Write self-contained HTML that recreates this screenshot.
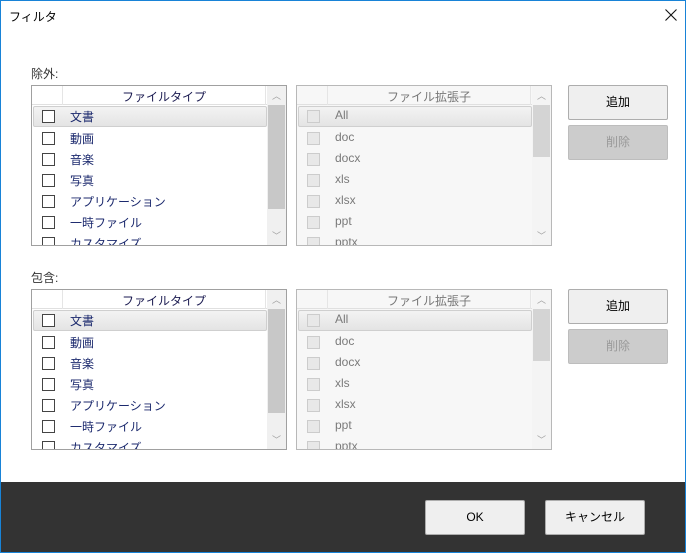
<!DOCTYPE html>
<html><head><meta charset="utf-8"><style>
*{margin:0;padding:0;box-sizing:border-box}
body{width:686px;height:553px;position:relative;background:#fff;font-family:"Liberation Sans","Noto Sans CJK JP",sans-serif;font-size:12px;overflow:hidden}
.win{position:absolute;left:0;top:0;width:686px;height:553px;border:1px solid #1883d7}
.a{position:absolute}
.title{left:9px;top:8px;font-size:12px;color:#000}
.lbl{font-size:12px;color:#333}
.list{position:absolute;width:256px;height:161px;border:1px solid #a0a0a0;background:#fff;overflow:hidden}
.list.dis{border-color:#b8b8b8;background:#f7f7f7}
.hdr{position:absolute;left:0;top:0;width:235px;height:19px;border-bottom:1px solid #e0e0e0;background:#fff}
.dis .hdr{background:#f7f7f7}
.hdr .sep{position:absolute;left:30px;top:0;width:1px;height:19px;background:#e5e5e5}
.hdr .sep2{position:absolute;left:233px;top:0;width:1px;height:19px;background:#e5e5e5}
.hdr span{position:absolute;left:31px;width:202px;top:2px;text-align:center;color:#1a1a50}
.dis .hdr span{color:#777}
.sb{position:absolute;left:235px;top:0;width:19px;height:159px;background:#f0f0f0}
.dis .sb{background:#f4f4f4}
.thumb{position:absolute;left:1px;width:17px;background:#c8c8c8}
.dis .thumb{background:#d4d4d4}
.arr{position:absolute;left:5px;font-size:9px;color:#a0a0a0}
.row{position:absolute;left:1px;width:234px;height:21px}
.row.sel{border:1px solid #cfcfcf;background:linear-gradient(#f3f3f3,#e4e4e4);border-radius:2px}
.cb{position:absolute;left:9px;top:4px;width:13px;height:13px;border:1px solid #444;background:#fff}
.sel .cb{left:8px;top:3px}
.dis .cb{border-color:#ccc;background:#e8e8e8}
.row span{position:absolute;left:37px;top:2px;color:#1c2a6e;font-size:12px}
.sel span{left:36px;top:1px}
.dis .row span{color:#7a7a7a}
.btn{position:absolute;width:100px;height:35px;border:1px solid #adadad;background:#efefef;border-radius:2px;text-align:center;line-height:33px;color:#000;font-size:12px}
.btn.off{background:#cccccc;border-color:#bdbdbd;color:#999}
.foot{position:absolute;left:1px;top:482px;width:684px;height:70px;background:#333}
</style></head><body>
<div class="win"></div>
<div class="a title">フィルタ</div>
<svg class="a" style="left:665px;top:9px" width="12" height="12" viewBox="0 0 12 12"><path d="M0.5 0.5L11.5 11.5M11.5 0.5L0.5 11.5" stroke="#111" stroke-width="1.1" fill="none"/></svg>

<div class="a lbl" style="left:31px;top:65px">除外:</div>
<div class="a lbl" style="left:31px;top:269px">包含:</div>

<div class="list" style="left:31px;top:85px">
 <div class="hdr"><div class="sep"></div><div class="sep2"></div><span>ファイルタイプ</span></div>
 <div class="row sel" style="top:20px"><div class="cb"></div><span>文書</span></div>
 <div class="row" style="top:42px"><div class="cb"></div><span>動画</span></div>
 <div class="row" style="top:63px"><div class="cb"></div><span>音楽</span></div>
 <div class="row" style="top:84px"><div class="cb"></div><span>写真</span></div>
 <div class="row" style="top:105px"><div class="cb"></div><span>アプリケーション</span></div>
 <div class="row" style="top:126px"><div class="cb"></div><span>一時ファイル</span></div>
 <div class="row" style="top:147px"><div class="cb"></div><span>カスタマイズ</span></div>
 <div class="sb"><div class="arr" style="top:3px">︿</div><div class="thumb" style="top:19px;height:104px"></div><div class="arr" style="top:143px">﹀</div></div>
</div>
<div class="list dis" style="left:296px;top:85px">
 <div class="hdr"><div class="sep"></div><div class="sep2"></div><span>ファイル拡張子</span></div>
 <div class="row sel" style="top:20px"><div class="cb"></div><span>All</span></div>
 <div class="row" style="top:42px"><div class="cb"></div><span>doc</span></div>
 <div class="row" style="top:63px"><div class="cb"></div><span>docx</span></div>
 <div class="row" style="top:84px"><div class="cb"></div><span>xls</span></div>
 <div class="row" style="top:105px"><div class="cb"></div><span>xlsx</span></div>
 <div class="row" style="top:126px"><div class="cb"></div><span>ppt</span></div>
 <div class="row" style="top:147px"><div class="cb"></div><span>pptx</span></div>
 <div class="sb"><div class="arr" style="top:3px">︿</div><div class="thumb" style="top:19px;height:52px"></div><div class="arr" style="top:143px">﹀</div></div>
</div>
<div class="btn" style="left:568px;top:85px">追加</div>
<div class="btn off" style="left:568px;top:125px">削除</div>

<div class="list" style="left:31px;top:289px">
 <div class="hdr"><div class="sep"></div><div class="sep2"></div><span>ファイルタイプ</span></div>
 <div class="row sel" style="top:20px"><div class="cb"></div><span>文書</span></div>
 <div class="row" style="top:42px"><div class="cb"></div><span>動画</span></div>
 <div class="row" style="top:63px"><div class="cb"></div><span>音楽</span></div>
 <div class="row" style="top:84px"><div class="cb"></div><span>写真</span></div>
 <div class="row" style="top:105px"><div class="cb"></div><span>アプリケーション</span></div>
 <div class="row" style="top:126px"><div class="cb"></div><span>一時ファイル</span></div>
 <div class="row" style="top:147px"><div class="cb"></div><span>カスタマイズ</span></div>
 <div class="sb"><div class="arr" style="top:3px">︿</div><div class="thumb" style="top:19px;height:104px"></div><div class="arr" style="top:143px">﹀</div></div>
</div>
<div class="list dis" style="left:296px;top:289px">
 <div class="hdr"><div class="sep"></div><div class="sep2"></div><span>ファイル拡張子</span></div>
 <div class="row sel" style="top:20px"><div class="cb"></div><span>All</span></div>
 <div class="row" style="top:42px"><div class="cb"></div><span>doc</span></div>
 <div class="row" style="top:63px"><div class="cb"></div><span>docx</span></div>
 <div class="row" style="top:84px"><div class="cb"></div><span>xls</span></div>
 <div class="row" style="top:105px"><div class="cb"></div><span>xlsx</span></div>
 <div class="row" style="top:126px"><div class="cb"></div><span>ppt</span></div>
 <div class="row" style="top:147px"><div class="cb"></div><span>pptx</span></div>
 <div class="sb"><div class="arr" style="top:3px">︿</div><div class="thumb" style="top:19px;height:52px"></div><div class="arr" style="top:143px">﹀</div></div>
</div>
<div class="btn" style="left:568px;top:289px">追加</div>
<div class="btn off" style="left:568px;top:329px">削除</div>

<div class="foot"></div>
<div class="btn" style="left:425px;top:500px">OK</div>
<div class="btn" style="left:545px;top:500px">キャンセル</div>
</body></html>
